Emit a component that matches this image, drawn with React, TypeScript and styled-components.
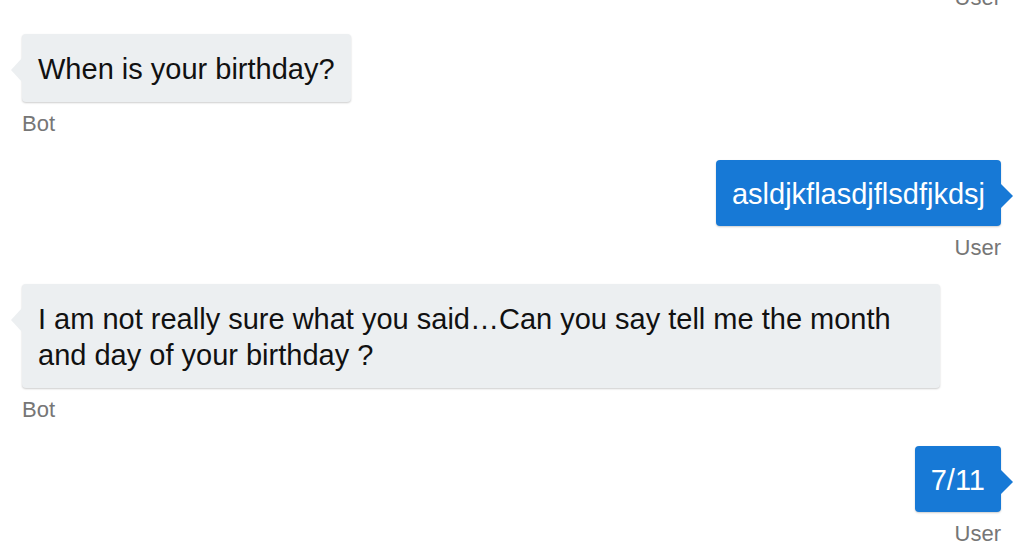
import styled, { createGlobalStyle, css } from "styled-components";

type From = "bot" | "user";

const messages: { from: From; text: string }[] = [
  { from: "user", text: "ok" },
  { from: "bot", text: "When is your birthday?" },
  { from: "user", text: "asldjkflasdjflsdfjkdsj" },
  {
    from: "bot",
    text: "I am not really sure what you said…Can you say tell me the month and day of your birthday ?",
  },
  { from: "user", text: "7/11" },
];

const App = () => {
  return (
    <>
      <GlobalStyle />
      <Chat>
        {messages.map((m, i) => (
          <Group key={i} from={m.from}>
            <Bubble from={m.from}>{m.text}</Bubble>
            <Sender>{m.from === "bot" ? "Bot" : "User"}</Sender>
          </Group>
        ))}
      </Chat>
    </>
  );
};

const GlobalStyle = createGlobalStyle`
  html, body {
    margin: 0;
    padding: 0;
    background: #ffffff;
  }
  body {
    font-family: "Liberation Sans", Arial, sans-serif;
  }
`;

const Chat = styled.div`
  height: 100vh;
  display: flex;
  flex-direction: column;
  justify-content: flex-end;
  overflow: hidden;
  padding: 0 27px 8px 22px;
  box-sizing: border-box;
`;

const Group = styled.div<{ from: From }>`
  display: flex;
  flex-direction: column;
  align-items: ${(p) => (p.from === "bot" ? "flex-start" : "flex-end")};
  flex-shrink: 0;

  & + & {
    margin-top: 24px;
  }
`;

const Bubble = styled.div<{ from: From }>`
  position: relative;
  max-width: 918px;
  box-sizing: border-box;
  padding: 17px 16px 15px;
  border-radius: 4px;
  font-size: 29px;
  line-height: 36px;
  box-shadow: 0 1px 2px rgba(0, 0, 0, 0.2);

  &::before {
    content: "";
    position: absolute;
    top: 24px;
    width: 0;
    height: 0;
    border-top: 12px solid transparent;
    border-bottom: 12px solid transparent;
  }

  ${(p) =>
    p.from === "bot"
      ? css`
          background: #eceff1;
          color: #111111;

          &::before {
            left: -11px;
            border-right: 11px solid #eceff1;
          }
        `
      : css`
          background: #1779d6;
          color: #ffffff;
          padding: 16px 16px 14px;

          &::before {
            right: -12px;
            border-left: 12px solid #1779d6;
          }
        `}
`;

const Sender = styled.div`
  margin-top: 10px;
  font-size: 22px;
  line-height: 24px;
  color: #767676;
`;

export default App;
